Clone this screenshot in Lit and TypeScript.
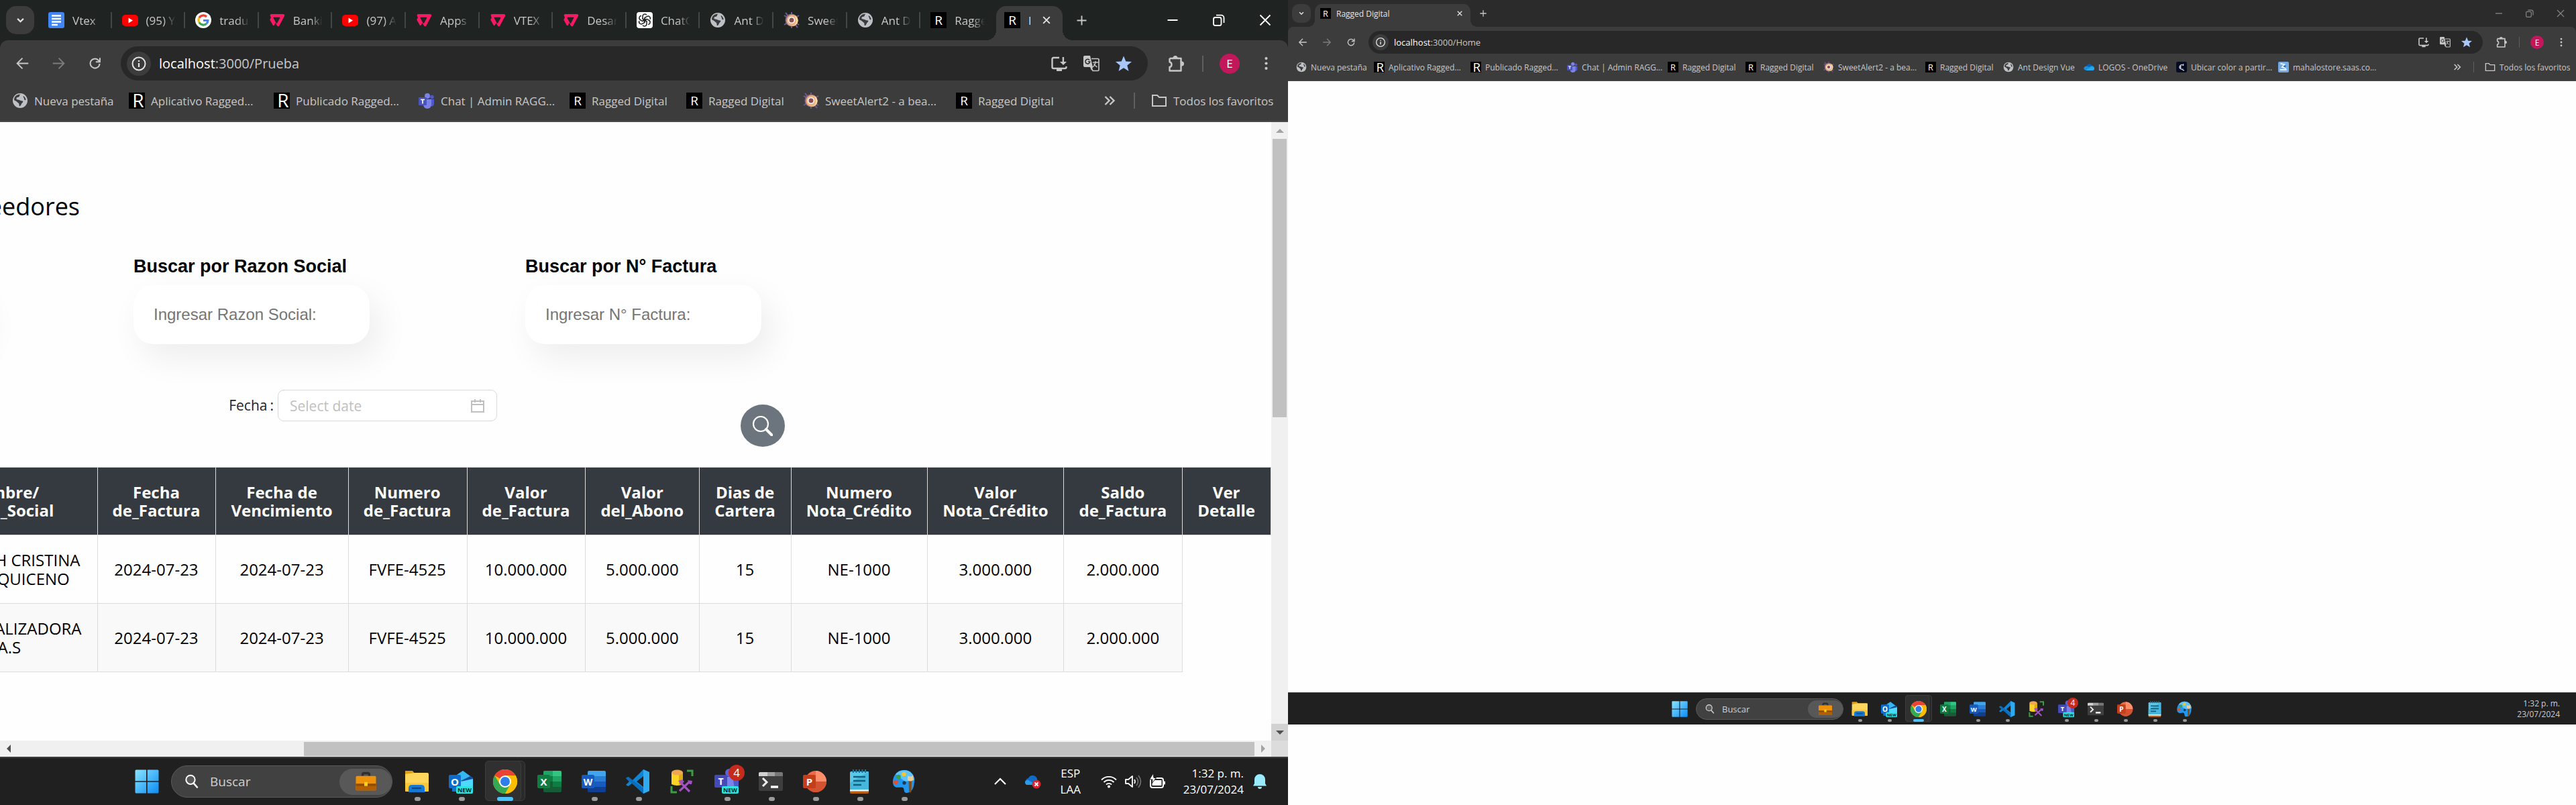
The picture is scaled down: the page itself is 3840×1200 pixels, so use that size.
import { LitElement, html, css, svg, nothing, type TemplateResult } from "lit";
import { customElement, property } from "lit/decorators.js";

type Art = TemplateResult;

const icon = (size: number, art: Art) =>
  html`<svg class="icon" viewBox="0 0 ${size} ${size}" aria-hidden="true">${art}</svg>`;

/* ---------- favicons, 24 x 24 ---------- */
const favicons: Record<string, Art> = {
  docs: svg`<rect width="24" height="24" rx="3" fill="#4285f4"/>
    <path d="M5 5.500h14M5 10h14M5 14.500h14M5 19h9" stroke="#fff" stroke-width="2.400"/>`,
  youtube: svg`<rect y="4" width="24" height="17" rx="5" fill="#f00"/><path d="M9.500 8.500v8l6.500-4z" fill="#fff"/>`,
  google: svg`<circle cx="12" cy="12" r="12" fill="#fff"/>
    <g fill="none" stroke-width="3.200">
      <path d="M17 7A7 7 0 0 0 6 8.500" stroke="#ea4335"/>
      <path d="M6 8.500a7 7 0 0 0 0 7" stroke="#fbbc05"/>
      <path d="M6 15.500a7 7 0 0 0 10.500 2" stroke="#34a853"/>
      <path d="M16.500 17.500a6.500 6.500 0 0 0 2.400-5H12" stroke="#4285f4"/>
    </g>`,
  vtex: svg`<path d="M3.500 3h17.700c1.600 0 2.600 1.600 1.800 3l-7.600 14.300a2 2 0 0 1-3.500 0l-2.300-4.300-1.900 3.500a1.200 1.200 0 0 1-2 0L1.500 12a1.200 1.200 0 0 1 0-1.200L3 8 1.900 5.900C1.200 4.600 2 3 3.500 3zm3.800 4.700a.8.8 0 0 0-.7 1.200l4.100 7.700a.8.8 0 0 0 1.400 0l4.100-7.700a.8.8 0 0 0-.7-1.200z" fill="#f71963"/>`,
  gpt: svg`<rect width="24" height="24" rx="4" fill="#fff"/>
    <g fill="none" stroke="#222" stroke-width="1.500">
      ${[0, 60, 120, 180, 240, 300].map(
        (a) => svg`<path transform="rotate(${a} 12 12)" d="M9 10.200V6.300a3.300 3.300 0 0 1 6-1.900M9 10.200l3.200 1.900 3.400-2"/>`
      )}
    </g>`,
  globe: svg`<circle cx="12" cy="12" r="11" fill="#bdc1c6"/>
    <path d="M13 2.500c-3 1-1 3-3 4s-3 0-3.500 2 2 2 4 2.500 2.500 1.500 4.500 1.500 1.500 2 0 3-1 3-3 4.500c-1 .8-1.600-.8-1.500-2 .2-2-1.500-2.500-3-4s-3.500-2-4.500-3C3 6 7 2.500 13 2.500z" fill="#3c3c3c"/>
    <path d="M17 5c2 1.500 3.500 3.500 3.600 6-1.600 1-2.600-.3-2.600-1.800S16 7 17 5z" fill="#3c3c3c"/>`,
  sweet: svg`<g stroke="#6e5a86" stroke-width="2">
      <path d="M12 0v24M1 5l22 14M23 5L1 19M3 1l18 22"/></g>
    <circle cx="12" cy="12" r="9.500" fill="#8b6b86"/><circle cx="13" cy="12.500" r="8.500" fill="#eeb183"/>
    <path d="M17 5a8.500 8.500 0 0 1-5 16c4 0 7-3 7-8z" fill="#f8d9a0"/><circle cx="12" cy="12" r="5" fill="#fff"/><circle cx="12" cy="12" r="3.500" fill="#8a4f52"/>`,
  ragged: svg`<rect width="24" height="24" fill="#000"/><text x="12" y="19" text-anchor="middle" font-size="19" font-family="Open Sans, sans-serif" fill="#fff">R</text>`,
  raggedBig: svg`<rect width="24" height="24" fill="#000"/><text x="14" y="22" text-anchor="middle" font-size="28" font-family="Open Sans, sans-serif" font-weight="400" fill="#fff">R</text>`,
  teams: svg`<circle cx="13" cy="5" r="4" fill="#7b83eb"/><circle cx="20" cy="6.500" r="2.700" fill="#5059c9"/>
    <path d="M16 10h7v7a4 4 0 0 1-6 3z" fill="#5059c9"/><path d="M7 10h12v8a6 6 0 0 1-12 0z" fill="#7b83eb"/>
    <rect y="7" width="12" height="12" rx="1" fill="#4b53bc"/><path d="M3 10.500h6M6 10.500v6" stroke="#fff" stroke-width="1.700"/>`,
  onedrive: svg`<path d="M7 9a6 6 0 0 1 11-1l-6 8-8 1C2 14 3 10 7 9z" fill="#0a5fb4"/><path d="M2 18c-3-3-1-8 4-8 3 0 4 1 6 2l6-3c4 0 6 3 6 6 0 2-1 4-3 4H5z" fill="#1490df"/><path d="M5 19l11-7c2-2 8 0 8 3s-2 4.500-4 4.500H6z" fill="#28a8ea"/>`,
  color: svg`<rect width="24" height="24" rx="4" fill="#050b20"/><path d="M15.500 8a5 5 0 1 0 0 8M12 9.500a2.500 2.500 0 1 0 0 5M16 5v4M14 18l4 2" fill="none" stroke="#e8ecf5" stroke-width="1.600"/>`,
  mahalo: svg`<rect width="24" height="24" rx="3" fill="#74a9e2"/><path d="M5 4l9 2-5 6 9 3M4 18h15" stroke="#e4f0fc" stroke-width="3" fill="none"/><path d="M11 10l6-3v7z" fill="#2d6db8"/>`,
};

/* ---------- browser glyphs, 24 x 24, drawn in the current colour ---------- */
const line = (d: string, w = 2) =>
  svg`<path d=${d} fill="none" stroke="currentColor" stroke-width=${w}/>`;
const glyphs: Record<string, Art> = {
  down: line("M7 9l5 5 5-5", 2.6),
  back: line("M22 12H3.500M12 3L3 12l9 9", 2.2),
  forward: line("M2 12h18.500M12 3l9 9-9 9", 2.2),
  reload: svg`${line("M20 12.500a8 8 0 1 1-2.500-6.200L20 9", 2.3)}${line("M20.500 2.500v7h-7", 2.3)}`,
  info: svg`<circle cx="12" cy="12" r="9.500" fill="none" stroke="currentColor" stroke-width="2"/><path d="M12 11v6M12 7v2" stroke="currentColor" stroke-width="2.200"/>`,
  close: line("M5.500 5.500l13 13M18.500 5.500l-13 13", 2.5),
  plus: line("M12 4v16M4 12h16", 2.2),
  install: svg`${line("M12 3H3.500Q1.500 3 1.500 5v12q0 2 2 2h17q2 0 2-2v-1", 2.4)}<path d="M8 18h8v5H8zM16.700 2h2.400v7h4L18 14 13 9h3.700z" fill="currentColor"/>`,
  translate: svg`<path d="M2 0h8l4 17H2q-2 0-2-2V2q0-2 2-2z" fill="currentColor"/><path d="M9 6.500A3.400 3.400 0 1 0 9.800 9H7" fill="none" stroke="#282828" stroke-width="1.500"/>
    <path d="M12 4.500h9.500q1.500 0 1.500 1.500v15q0 1.500-1.500 1.500H14l-2.500-5" fill="none" stroke="currentColor" stroke-width="1.700"/><path d="M14 10h8M18 8v2c0 3-2 5-4 7M15.500 12c1 2 3 4 5 5" fill="none" stroke="currentColor" stroke-width="1.400"/><path d="M10 17h4l-2 5z" fill="currentColor"/>`,
  star: svg`<path d="M12 .5l3.300 8 8.700.6-6.700 5.500 2.200 8.400L12 18.300 4.500 23l2.200-8.400L0 9.100l8.700-.6z" fill="#a8c7fa"/>`,
  puzzle: svg`<path d="M2.500 4H8M15 4h4.500v5M19.500 16v6.500h-17V17c4-.5 4-7 0-7.500V4" fill="none" stroke="currentColor" stroke-width="2.400" stroke-linejoin="round"/><path d="M7.500 5V3.500a3.500 3.500 0 0 1 7 0V5zM19 8.500h1.500a3.500 3.500 0 0 1 0 7H19z" fill="currentColor"/><path d="M19.500 8v8M7 4h9" stroke="currentColor" stroke-width="2.400"/>`,
  dots: svg`<g fill="currentColor"><circle cx="12" cy="3.500" r="2.400"/><circle cx="12" cy="12" r="2.400"/><circle cx="12" cy="20.500" r="2.400"/></g>`,
  more: line("M5.500 6l6 6-6 6M12.500 6l6 6-6 6", 2.4),
  folder: line("M2 4h7l3 3h10v13H2z", 2),
  minimize: line("M4.500 12h15", 2),
  restore: svg`<rect x="4" y="8" width="11.500" height="12" rx="2.500" fill="none" stroke="currentColor" stroke-width="1.800"/><path d="M8 4.700h7.500a4 4 0 0 1 4 4V16" fill="none" stroke="currentColor" stroke-width="1.800"/>`,
  exit: line("M4.500 4.500l15 15M19.500 4.500l-15 15", 1.8),
};

/* ---------- desktop icons, 36 x 36 ---------- */
const letter = (x: number, y: number, s: string, size = 16, fill = "#fff") =>
  svg`<text x=${x} y=${y} text-anchor="middle" font-size=${size} font-weight="700" font-family="Open Sans, sans-serif" fill=${fill}>${s}</text>`;
const newBadge = svg`<rect x="11" y="25" width="25" height="11" rx="2" fill="#2fe4e0"/>${letter(23.5, 34, "NEW", 9, "#07262b")}`;

const apps: Record<string, Art> = {
  start: svg`<defs><linearGradient id="win" x2="1" y2="1"><stop stop-color="#8be4ff"/><stop offset="1" stop-color="#0a8cf5"/></linearGradient></defs>
    <path d="M2 .5h15v16.700H.5V2Q.5.500 2 .5zM18.700.5H34q1.500 0 1.500 1.500v15.200H18.700zM.5 18.800H17v16.700H2Q.5 35.500.5 34zM18.700 18.800h16.800V34q0 1.500-1.500 1.500H18.700z" fill="url(#win)"/>`,
  search: svg`<circle cx="15" cy="14" r="10" fill="#ffffff22" stroke="currentColor" stroke-width="3"/><path d="M22 22l8 9" stroke="currentColor" stroke-width="3.600" stroke-linecap="round"/>`,
  bag: svg`<path d="M12 8V6q0-3 3-3h6q3 0 3 3v2" fill="none" stroke="#2e2e2e" stroke-width="4"/><rect y="8" width="36" height="26" rx="2" fill="#ee9209"/><path d="M0 22h36v10q0 2-2 2H2q-2 0-2-2z" fill="#b25f04"/><path d="M0 22h36v4H0z" fill="#8f4c06"/><rect x="15" y="19" width="6" height="7" fill="#f7d514"/>`,
  folder: svg`<path d="M1 2h11l4 5H1z" fill="#e0a00e"/><path d="M1 7l14-2h19q2 0 2 2v25H1z" fill="#ffd65c"/><path d="M1 20h35v12q0 1-1 1H2q-1 0-1-1z" fill="#fcc736"/><path d="M6 34v-6q0-5 5-5h14q5 0 5 5v6z" fill="#1478d4"/><path d="M11 28h14" stroke="#0a4a8c" stroke-width="2.400"/>`,
  outlook: svg`<path d="M5 13L21 2l15 11v20H5z" fill="#1276d1"/><path d="M12 8l9-6 15 11-15 9z" fill="#35b8f1"/><path d="M36 13v14L18 17l14-7z" fill="#124a9e"/><path d="M18 18l18-4v16H12z" fill="#50d9ff"/><rect y="8" width="18" height="20" rx="2" fill="#0f6cc9"/>${letter(9, 23.5, "O", 15)}${newBadge}`,
  chrome: svg`<circle cx="18" cy="18" r="18" fill="#fbbc04"/><path d="M18 18L2.400 9a18 18 0 0 1 31.200 0H18z" fill="#ea4335"/><path d="M2.400 9a18 18 0 0 0 15.600 27l8-14L10 22z" fill="#34a853"/><path d="M33.600 9H18l8 13-8 14A18 18 0 0 0 33.600 9z" fill="#fbbc04"/><circle cx="18" cy="18" r="9" fill="#fff"/><circle cx="18" cy="18" r="7" fill="#2f7de9"/>`,
  excel: svg`<rect x="9" y="2" width="27" height="32" rx="2" fill="#185c37"/><path d="M9 10V4q0-2 2-2h12v8z" fill="#21a366"/><path d="M23 2h11q2 0 2 2v6H23z" fill="#33c481"/><path d="M9 10h14v8H9z" fill="#107c41"/><path d="M23 10h13v8H23z" fill="#21a366"/><path d="M23 18h13v8H23z" fill="#107c41"/><rect y="8" width="19" height="20" rx="2" fill="#107c41"/>${letter(9.5, 23.5, "X", 15)}`,
  word: svg`<path d="M9 10V4q0-2 2-2h23q2 0 2 2v6z" fill="#41a5ee"/><path d="M9 10h27v8H9z" fill="#2b7cd3"/><path d="M9 18h27v8H9z" fill="#185abd"/><path d="M9 26h27v6q0 2-2 2H11q-2 0-2-2z" fill="#103f91"/><rect y="8" width="19" height="20" rx="2" fill="#185abd"/>${letter(9.5, 23.5, "W", 14)}`,
  code: svg`<path d="M26 0l9 4v28l-9 4L10 20l-6.500 5L0 23l5-5-5-5 3.500-2L10 16zM26 10l-10 8 10 8z" fill="#0e86d4" fill-rule="evenodd"/><path d="M26 0l9 4v28l-9 4z" fill="#2fa9f0"/><path d="M0 13l3.500-2L26 28v8z" fill="#0a6dbd"/>`,
  ssms: svg`<path d="M2 5v17q8 4 17 0V5z" fill="#fdd425"/><path d="M13 5v18q3 0 6-1.500V5z" fill="#e0a911"/><ellipse cx="10.500" cy="4.500" rx="8.500" ry="4" fill="#f0a953"/><path d="M25 2h8v8M2 25v9h8" fill="none" stroke="#3f9c46" stroke-width="3"/><path d="M14 32l14-13M15 19l14 14" stroke="#a053c0" stroke-width="3.200"/><path d="M12 17l6-2 3 3-4 4zM26 16l7 1-1 5-3 0z" fill="#a053c0"/>`,
  teams: svg`<circle cx="22" cy="5" r="6" fill="#5b63d6"/><path d="M14 11h22v18q-2 7-11 7-8 0-11-6z" fill="#7b83eb"/><path d="M27 11h9v18l-5 5z" fill="#5059c9"/><rect y="8" width="19" height="19" rx="2" fill="#444ab8"/>${letter(9.5, 23, "T", 14)}${newBadge}`,
  terminal: svg`<rect y="4" width="36" height="28" rx="2" fill="#3e3e3e"/><path d="M2 4h11v6H0V6q0-2 2-2z" fill="#d2d2d2"/><path d="M13 4h11v6H13z" fill="#a2a2a2"/><path d="M24 4h10q2 0 2 2v4H24z" fill="#777"/><path d="M6 13l6 6-6 6" fill="none" stroke="#eee" stroke-width="3"/><path d="M18 26h11" stroke="#fff" stroke-width="3.500"/>`,
  powerpoint: svg`<circle cx="19" cy="18" r="16" fill="#ed6c47"/><path d="M19 2a16 16 0 0 1 16 16H19z" fill="#ff8f6b"/><path d="M3 18h32a16 16 0 0 1-32 0z" fill="#d35230"/><rect y="8" width="19" height="20" rx="2" fill="#c43e1c"/>${letter(9.5, 23.5, "P", 15)}`,
  notepad: svg`<rect x="4" y="3" width="28" height="30" rx="2" fill="#5ec8e8"/><path d="M4 20l28-17v28H4z" fill="#47b6dc"/><path d="M4 30h28v3H4z" fill="#f2f2f2"/><path d="M4 32.500h28V34q0 2-2 2H6q-2 0-2-2z" fill="#b8600f"/><path d="M9 0v5M13.500 0v5M18 0v5M22.500 0v5M27 0v5" stroke="#16739b" stroke-width="2.200"/><path d="M9 11h18M9 17h18M9 23h12" stroke="#11607f" stroke-width="2.400"/>`,
  paint: svg`<path d="M19 1C27 1 34 7 34 16c0 8-2 18-11 19-6 .5-3-6-6-8s-9 2-13-2C-1 19 3 1 19 1z" fill="#2196ee"/><path d="M19 1C27 1 34 7 34 16L20 18 6 7q5-6 13-6z" fill="#5cc4fa"/><circle cx="10.500" cy="11" r="3.300" fill="#3ea044"/><circle cx="18.500" cy="7" r="3.300" fill="#f7c52b"/><circle cx="6.500" cy="19" r="3.300" fill="#e4502a"/><circle cx="19" cy="20" r="2.700" fill="#17395e"/><path d="M25.500 16h4.500l-.5 17q-1.700 3-3.500 0z" fill="#8a4b12"/><path d="M24 9q4 3 8 0v7q-4 3-8 0z" fill="#eccb9a"/>`,
};

const tray: Record<string, Art> = {
  up: svg`<path d="M4 16l8-8 8 8" fill="none" stroke="currentColor" stroke-width="2.200"/>`,
  cloud: svg`<path d="M3 15a5 5 0 0 1 3-8 7 7 0 0 1 13 1v8z" fill="#0f6cc9"/><path d="M3 17c-4-3-2-8 3-7l12 7H5z" fill="#2a9be8"/><circle cx="18" cy="16" r="6.500" fill="#d9252f"/><path d="M15.500 13.500l5 5M20.500 13.500l-5 5" stroke="#fff" stroke-width="1.800"/>`,
  wifi: svg`<g fill="none" stroke="currentColor" stroke-width="1.800"><path d="M1 9.500a15.500 15.500 0 0 1 22 0M4.500 13a10.600 10.600 0 0 1 15 0M8 16.500a5.700 5.700 0 0 1 8 0"/></g><circle cx="12" cy="19.500" r="2" fill="currentColor"/>`,
  sound: svg`<path d="M1 9h4l6-5v16l-6-5H1z" fill="none" stroke="currentColor" stroke-width="1.800" stroke-linejoin="round"/><path d="M14 9q2 3 0 6" fill="none" stroke="currentColor" stroke-width="1.700"/><path d="M17 6q5 6 0 12M20 3q7 9 0 18" fill="none" stroke="#777" stroke-width="1.500"/>`,
  battery: svg`<rect x="2" y="7" width="19" height="14" rx="3" fill="none" stroke="currentColor" stroke-width="2"/><path d="M7 10h11.500v8h-14v-4zM22 11.500h1q1 0 1 1v3q0 1-1 1h-1z" fill="currentColor"/><path d="M6 0L.5 9H5l-1 6 6.500-8.500H7z" fill="currentColor" stroke="#202020" stroke-width="1"/>`,
  bell: svg`<path d="M12 1a8 8 0 0 1 8 8v6l2 3.500H2L4 15V9a8 8 0 0 1 8-8zM9 20h6a3 3 0 0 1-6 0z" fill="#99ebff"/>`,
};

interface Tab {
  icon: string;
  title: string;
  active?: boolean;
}
interface Bookmark {
  icon: string;
  title: string;
  /* label width in layout units */
  span: number;
}

const manyTabs: Tab[] = [
  { icon: "docs", title: "Vtex" },
  { icon: "youtube", title: "(95) YouTube" },
  { icon: "google", title: "traductor" },
  { icon: "vtex", title: "Banking" },
  { icon: "youtube", title: "(97) Apps" },
  { icon: "vtex", title: "Apps VTEX" },
  { icon: "vtex", title: "VTEX IO" },
  { icon: "vtex", title: "Desarrollo" },
  { icon: "gpt", title: "ChatGPT" },
  { icon: "globe", title: "Ant Design" },
  { icon: "sweet", title: "SweetAlert2" },
  { icon: "globe", title: "Ant Design" },
  { icon: "ragged", title: "Ragged Digital" },
  { icon: "ragged", title: "Ragged Digital", active: true },
];

const bookmarks: Bookmark[] = [
  { icon: "globe", title: "Nueva pestaña", span: 39 },
  { icon: "raggedBig", title: "Aplicativo Ragged...", span: 53 },
  { icon: "raggedBig", title: "Publicado Ragged...", span: 53 },
  { icon: "teams", title: "Chat | Admin RAGG...", span: 56 },
  { icon: "ragged", title: "Ragged Digital", span: 39 },
  { icon: "ragged", title: "Ragged Digital", span: 39 },
  { icon: "sweet", title: "SweetAlert2 - a bea...", span: 57 },
  { icon: "ragged", title: "Ragged Digital", span: 39 },
];
const moreBookmarks: Bookmark[] = [
  { icon: "globe", title: "Ant Design Vue", span: 41 },
  { icon: "onedrive", title: "LOGOS - OneDrive", span: 50 },
  { icon: "color", title: "Ubicar color a partir...", span: 57 },
  { icon: "mahalo", title: "mahalostore.saas.co...", span: 57 },
];

/* Every measure of the chrome is a multiple of --u, so one sheet serves both display scales. */
const scaleStyles = css`
  :host {
    --u: 2px;
    --text: 12px;
    --url: 13px;
    --hair: 1px;
    display: block;
    font-family: "Open Sans", "Noto Sans", sans-serif;
  }
  :host([large]) {
    --u: 3px;
    --text: 17px;
    --url: 20px;
    --hair: 2px;
  }
  * {
    box-sizing: border-box;
  }
  button {
    border: 0;
    padding: 0;
    background: none;
    color: inherit;
    font: inherit;
    display: flex;
    align-items: center;
    justify-content: center;
    flex: none;
  }
  .icon {
    display: block;
    flex: none;
    overflow: visible;
    width: calc(var(--u) * 8);
    height: calc(var(--u) * 8);
  }
`;

@customElement("browser-window")
export class BrowserWindow extends LitElement {
  @property({ type: Boolean, reflect: true }) large = false;
  @property() host = "";
  @property() path = "";
  @property({ attribute: false }) tabs: Tab[] = [];
  @property({ attribute: false }) bookmarks: Bookmark[] = [];

  static styles = [
    scaleStyles,
    css`
      :host {
        display: flex;
        flex-direction: column;
        min-height: 0;
        color: #c7c7c7;
        background: #2b2b2b;
        font-size: var(--text);
      }
      :host([large]) {
        background: #1f2322;
      }
      .strip {
        display: flex;
        height: calc(var(--u) * 20);
        padding-left: calc(var(--u) * 3);
      }
      .tab-search {
        width: calc(var(--u) * 14);
        height: calc(var(--u) * 14);
        margin: calc(var(--u) * 3) calc(var(--u) * 3) 0 0;
        border-radius: calc(var(--u) * 5);
        background: #3c3c3c;
        color: #e3e3e3;
      }
      .tabs {
        display: flex;
        flex: 0 1 calc(var(--u) * 116);
        min-width: 0;
        padding-top: calc(var(--u) * 3);
      }
      :host([large]) .tabs {
        flex-basis: calc(var(--u) * 508);
      }
      .tab {
        display: flex;
        align-items: center;
        flex: 1 1 0;
        min-width: 0;
        gap: calc(var(--u) * 4);
        padding: 0 calc(var(--u) * 1) calc(var(--u) * 3) calc(var(--u) * 4);
      }
      .tab.active {
        position: relative;
        background: #3c3c3c;
        color: #e3e3e3;
        border-radius: calc(var(--u) * 5) calc(var(--u) * 5) 0 0;
        padding-right: calc(var(--u) * 2);
      }
      :host([large]) .tab.active {
        flex: 0 0 calc(var(--u) * 33);
      }
      .tab.active::before,
      .tab.active::after {
        content: "";
        position: absolute;
        bottom: 0;
        width: calc(var(--u) * 5);
        height: calc(var(--u) * 5);
      }
      .tab.active::before {
        right: 100%;
        background: radial-gradient(circle at 0 0, transparent calc(var(--u) * 5), #3c3c3c calc(var(--u) * 5));
      }
      .tab.active::after {
        left: 100%;
        background: radial-gradient(circle at 100% 0, transparent calc(var(--u) * 5), #3c3c3c calc(var(--u) * 5));
      }
      .tab-title {
        flex: 1;
        min-width: 0;
        overflow: hidden;
        white-space: nowrap;
        mask-image: linear-gradient(to right, #000 calc(100% - var(--u) * 6), transparent);
      }
      .active .tab-title {
        mask-image: none;
      }
      .tab-line {
        width: var(--hair);
        height: calc(var(--u) * 8);
        background: #454746;
      }
      .tab-line.off {
        background: none;
      }
      .tab-close {
        width: calc(var(--u) * 12);
        margin-left: calc(var(--u) * -2);
      }
      .tab-close .icon {
        width: calc(var(--u) * 6);
        height: calc(var(--u) * 6);
      }
      .new-tab {
        width: calc(var(--u) * 19);
      }
      .window-buttons {
        display: flex;
        margin-left: auto;
        color: #858585;
      }
      :host([large]) .window-buttons {
        color: #fff;
      }
      .window-buttons button {
        width: calc(var(--u) * 23);
      }
      .panel {
        background: #3c3c3c;
        border-radius: calc(var(--u) * 4) calc(var(--u) * 4) 0 0;
        border-bottom: var(--hair) solid #4a4a4a;
      }
      .toolbar {
        display: flex;
        align-items: center;
        padding: calc(var(--u) * 3) calc(var(--u) * 2) 0;
      }
      .tool {
        width: calc(var(--u) * 18);
        height: calc(var(--u) * 17);
      }
      .small .icon {
        width: calc(var(--u) * 7);
        height: calc(var(--u) * 7);
      }
      .dim {
        color: #7c7c7c;
      }
      .omnibox {
        display: flex;
        align-items: center;
        flex: 1;
        min-width: 0;
        height: calc(var(--u) * 17);
        margin: 0 calc(var(--u) * 5) 0 calc(var(--u) * 4);
        padding: 0 calc(var(--u) * 4) 0 calc(var(--u) * 3);
        border-radius: calc(var(--u) * 9);
        background: #282828;
        font-size: var(--url);
      }
      .site {
        width: calc(var(--u) * 12);
        height: calc(var(--u) * 12);
        border-radius: 50%;
        background: #3c3c3c;
        color: #e3e3e3;
      }
      .url {
        flex: 1;
        padding-left: calc(var(--u) * 4);
        white-space: nowrap;
      }
      .url b {
        font-weight: 400;
        color: #fff;
      }
      .omnibox .action {
        width: calc(var(--u) * 16);
      }
      .divider {
        width: var(--hair);
        height: calc(var(--u) * 8);
        margin: 0 calc(var(--u) * 4);
        background: #5f5f5f;
        flex: none;
      }
      .avatar {
        width: calc(var(--u) * 10);
        height: calc(var(--u) * 10);
        border-radius: 50%;
        background: #c2185b;
        color: #fff;
        display: flex;
        align-items: center;
        justify-content: center;
      }
      .bookmarks {
        display: flex;
        align-items: center;
        height: calc(var(--u) * 20);
        padding: 0 calc(var(--u) * 7) 0 calc(var(--u) * 6);
        gap: calc(var(--u) * 8);
        white-space: nowrap;
      }
      .bookmark {
        display: flex;
        align-items: center;
        gap: calc(var(--u) * 3);
        color: inherit;
        text-decoration: none;
      }
      .overflow {
        margin-left: auto;
      }
      .bookmarks .divider {
        margin: 0;
      }
      .view {
        flex: 1;
        min-height: 0;
        display: flex;
        background: #fefefe;
      }
      ::slotted(*) {
        flex: 1;
        min-width: 0;
      }
    `,
  ];

  private tabView(tab: Tab, i: number) {
    const next = this.tabs[i + 1];
    return html`<div class="tab ${tab.active ? "active" : ""}">
      ${icon(24, favicons[tab.icon])}
      <span class="tab-title">${tab.title}</span>
      ${tab.active
        ? html`<button class="tab-close" aria-label="Cerrar">${icon(24, glyphs.close)}</button>`
        : html`<span class="tab-line ${next?.active ? "off" : ""}"></span>`}
    </div>`;
  }

  private tool(name: string, label: string, extra = "") {
    return html`<button class="tool ${extra}" aria-label=${label}>${icon(24, glyphs[name])}</button>`;
  }

  render() {
    return html`
      <div class="strip">
        <button class="tab-search small" aria-label="Buscar pestañas">${icon(24, glyphs.down)}</button>
        <div class="tabs">${this.tabs.map((t, i) => this.tabView(t, i))}</div>
        <button class="new-tab small" aria-label="Nueva pestaña">${icon(24, glyphs.plus)}</button>
        <div class="window-buttons">
          <button aria-label="Minimizar">${icon(24, glyphs.minimize)}</button>
          <button aria-label="Restaurar">${icon(24, glyphs.restore)}</button>
          <button aria-label="Cerrar ventana">${icon(24, glyphs.exit)}</button>
        </div>
      </div>
      <div class="panel">
        <div class="toolbar">
          ${this.tool("back", "Atrás", "small")} ${this.tool("forward", "Adelante", "small dim")}
          ${this.tool("reload", "Recargar", "small")}
          <div class="omnibox">
            <button class="site" aria-label="Información del sitio">${icon(24, glyphs.info)}</button>
            <span class="url"><b>${this.host}</b>${this.path}</span>
            <button class="action" aria-label="Instalar">${icon(24, glyphs.install)}</button>
            <button class="action" aria-label="Traducir">${icon(24, glyphs.translate)}</button>
            <button class="action" aria-label="Favorito">${icon(24, glyphs.star)}</button>
          </div>
          ${this.tool("puzzle", "Extensiones")}
          <span class="divider"></span>
          <button class="tool" aria-label="Perfil"><span class="avatar">E</span></button>
          ${this.tool("dots", "Menú", "small")}
        </div>
        <nav class="bookmarks">
          ${this.bookmarks.map(
            (b) => html`<a class="bookmark" href="#">
              ${icon(24, favicons[b.icon])}
              <span style="width:calc(var(--u) * ${b.span})">${b.title}</span>
            </a>`
          )}
          <button class="overflow" aria-label="Más">${icon(24, glyphs.more)}</button>
          <span class="divider"></span>
          <a class="bookmark" href="#">
            ${icon(24, glyphs.folder)}
            <span style="width:calc(var(--u) * ${50})">Todos los favoritos</span>
          </a>
        </nav>
      </div>
      <div class="view"><slot></slot></div>
    `;
  }
}

@customElement("task-bar")
export class TaskBar extends LitElement {
  @property({ type: Boolean, reflect: true }) large = false;

  static styles = [
    scaleStyles,
    css`
      :host {
        --label: 13px;
      }
      :host([large]) {
        --label: 19px;
      }
      .bar {
        display: flex;
        align-items: center;
        height: calc(var(--u) * 24);
        border-top: var(--hair) solid #3b3e3e;
        background: #202020;
        color: #ccc;
        font-size: var(--text);
        line-height: calc(var(--u) * 8);
      }
      :host([large]) .bar {
        color: #fff;
      }
      .lead {
        flex: 1 1 0;
        padding-right: calc(var(--u) * 12);
      }
      :host([large]) .lead {
        flex: 0 0 calc(var(--u) * 62);
      }
      .group {
        display: flex;
        align-items: center;
      }
      .app {
        position: relative;
        width: calc(var(--u) * 22);
        height: calc(var(--u) * 23);
      }
      .app .icon {
        width: calc(var(--u) * 12);
        height: calc(var(--u) * 12);
        position: relative;
      }
      .app.current::before,
      .app.current::after {
        content: "";
        position: absolute;
        top: calc(var(--u) * 1);
        bottom: calc(var(--u) * 2);
        left: calc(var(--u) * 1);
        right: calc(var(--u) * 1);
        border: 1px solid #3c3c3c;
        border-radius: calc(var(--u) * 2);
        background: #2a2a2a;
      }
      .app.current::after {
        right: calc(var(--u) * 3);
        background: #303030;
      }
      .app.current .icon {
        z-index: 1;
      }
      .mark {
        position: absolute;
        z-index: 1;
        bottom: calc(var(--u) * 2);
        left: calc(var(--u) * 10);
        width: calc(var(--u) * 3);
        height: calc(var(--u) * 2);
        border-radius: calc(var(--u) * 1);
        background: #9a9a9a;
      }
      .current .mark {
        left: calc(var(--u) * 7);
        width: calc(var(--u) * 8);
        background: #4cc2ff;
      }
      .count {
        position: absolute;
        z-index: 1;
        top: calc(var(--u) * 3);
        right: calc(var(--u) * 2);
        width: calc(var(--u) * 8);
        height: calc(var(--u) * 8);
        border-radius: 50%;
        background: #c42b1c;
        color: #fff;
        text-align: center;
      }
      .search {
        display: flex;
        align-items: center;
        width: calc(var(--u) * 110);
        height: calc(var(--u) * 16);
        margin: 0 calc(var(--u) * 1);
        padding-left: calc(var(--u) * 6);
        border: 1px solid #5a5a5a;
        border-radius: calc(var(--u) * 8);
        background: #414141;
      }
      .search input {
        flex: 1;
        min-width: 0;
        border: 0;
        padding: 0 0 0 calc(var(--u) * 5);
        background: none;
        font: inherit;
        font-size: var(--label);
      }
      .search input::placeholder {
        color: #d0d0d0;
        opacity: 1;
      }
      .highlight {
        width: calc(var(--u) * 26);
        height: calc(var(--u) * 13);
        border-radius: calc(var(--u) * 7);
        background: #585858;
      }
      .highlight .icon {
        width: calc(var(--u) * 11);
        height: calc(var(--u) * 10);
      }
      .tray {
        display: flex;
        align-items: center;
        justify-content: flex-end;
        flex: 1 1 0;
        padding-right: calc(var(--u) * 12);
        text-align: right;
        white-space: nowrap;
      }
      :host([large]) .tray {
        padding-right: calc(var(--u) * 10);
      }
      .slot {
        width: calc(var(--u) * 16);
      }
      .lang {
        width: calc(var(--u) * 22);
        text-align: center;
      }
      .status {
        display: flex;
        gap: calc(var(--u) * 4);
        margin: 0 calc(var(--u) * 9) 0 calc(var(--u) * 4);
      }
      .bell {
        margin-left: calc(var(--u) * 4);
      }
    `,
  ];

  private readonly items: { name: string; label: string; open?: boolean; current?: boolean; count?: number }[] = [
    { name: "folder", label: "Explorador", open: true },
    { name: "outlook", label: "Outlook", open: true },
    { name: "chrome", label: "Chrome", open: true, current: true },
    { name: "excel", label: "Excel" },
    { name: "word", label: "Word", open: true },
    { name: "code", label: "Code", open: true },
    { name: "ssms", label: "SQL" },
    { name: "teams", label: "Teams", open: true, count: 4 },
    { name: "terminal", label: "Terminal", open: true },
    { name: "powerpoint", label: "PowerPoint", open: true },
    { name: "notepad", label: "Bloc de notas", open: true },
    { name: "paint", label: "Paint", open: true },
  ];

  render() {
    return html`<footer class="bar">
      <div class="lead"></div>
      <div class="group">
        <button class="app" aria-label="Inicio">${icon(36, apps.start)}</button>
        <div class="search">
          ${icon(36, apps.search)}
          <input type="search" aria-label="Buscar" placeholder="Buscar" />
          <button class="highlight" aria-label="Destacado">${icon(36, apps.bag)}</button>
        </div>
        ${this.items.map(
          (a) => html`<button class="app ${a.current ? "current" : ""}" aria-label=${a.label}>
            ${icon(36, apps[a.name])} ${a.open ? html`<span class="mark"></span>` : nothing}
            ${a.count ? html`<span class="count">${a.count}</span>` : nothing}
          </button>`
        )}
      </div>
      <div class="tray">
        ${this.large
          ? html`<button class="slot" aria-label="Mostrar iconos">${icon(24, tray.up)}</button>
              <button class="slot" aria-label="OneDrive">${icon(24, tray.cloud)}</button>
              <span class="lang">ESP<br />LAA</span>
              <span class="status">${icon(24, tray.wifi)}${icon(24, tray.sound)}${icon(24, tray.battery)}</span>`
          : nothing}
        <time>1:32 p. m.<br />23/07/2024</time>
        ${this.large ? html`<button class="bell" aria-label="Notificaciones">${icon(24, tray.bell)}</button>` : nothing}
      </div>
    </footer>`;
  }
}

@customElement("invoice-page")
export class InvoicePage extends LitElement {
  static styles = css`
    :host {
      display: grid;
      grid-template: minmax(0, 1fr) 24px / minmax(0, 1fr) 25px;
      background: #fefefe;
      color: #000;
      font-family: "Open Sans", "Noto Sans", sans-serif;
    }
    * {
      box-sizing: border-box;
    }
    .scroller {
      display: flex;
      justify-content: flex-end;
      overflow: hidden;
    }
    .content {
      flex: none;
      padding-top: 102px;
    }
    h1 {
      margin: 0 0 49px;
      padding-left: 43px;
      font-size: 36px;
      font-weight: 400;
      line-height: 48px;
    }
    .filters {
      display: flex;
      justify-content: flex-end;
      gap: 232px;
      width: 0;
      min-width: 100%;
      padding-right: 760px;
      margin-bottom: 68px;
      font-family: "Liberation Sans", Arial, sans-serif;
    }
    .field {
      display: flex;
      flex-direction: column;
      flex: none;
      gap: 12px;
      width: 352px;
    }
    .field label {
      font-size: 27px;
      font-weight: 700;
      line-height: 32px;
    }
    .field input {
      height: 88px;
      padding: 0 30px;
      border: 0;
      border-radius: 30px;
      background: #fff;
      box-shadow: 13px 20px 50px rgba(0, 0, 0, 0.07);
      font: inherit;
      font-size: 24px;
    }
    .field input::placeholder {
      color: #757575;
    }
    .search-row {
      display: flex;
      justify-content: flex-end;
      padding-right: 725px;
      margin-bottom: 30px;
      font-size: 21px;
    }
    .date-label {
      display: flex;
      gap: 4px;
      line-height: 47px;
      margin-right: 6px;
      color: #222;
    }
    .date {
      display: flex;
      align-items: center;
      width: 327px;
      height: 47px;
      padding: 0 18px 0 17px;
      border: 1px solid #d9d9d9;
      border-radius: 9px;
      background: #fff;
      color: #bfbfbf;
    }
    .date input {
      flex: 1;
      min-width: 0;
      border: 0;
      padding: 0;
      background: none;
      font: inherit;
    }
    .date input::placeholder {
      color: #bfbfbf;
      opacity: 1;
    }
    .calendar {
      width: 20px;
      height: 20px;
    }
    .go {
      align-self: flex-end;
      width: 66px;
      height: 63px;
      margin: 22px 0 0 363px;
      padding: 0;
      border: 0;
      border-radius: 50%;
      background: #6c757d;
      display: flex;
      align-items: center;
      justify-content: center;
    }
    .go svg {
      width: 30px;
      height: 30px;
    }
    table {
      border-collapse: collapse;
      font-size: 24px;
      text-align: center;
      white-space: nowrap;
    }
    th,
    td {
      padding: 23px 23px 22px 22px;
      border: 1px solid #dcdcdc;
      line-height: 28px;
    }
    th {
      padding-bottom: 23px;
      background: #343a40;
      color: #fff;
      line-height: 27px;
    }
    tbody tr:nth-child(even) td {
      background: #f9f9f9;
    }
    .bar {
      display: flex;
      background: #f0f0f0;
    }
    .vertical {
      flex-direction: column;
    }
    .end {
      display: flex;
      align-items: center;
      justify-content: center;
      flex: 0 0 25px;
      color: #a3a3a3;
    }
    .end.pressed {
      background: #d2d2d2;
      color: #505050;
    }
    .end.strong {
      color: #505050;
    }
    .end svg {
      width: 12px;
      height: 12px;
    }
    .thumb {
      margin: 0 2px;
      background: #c1c1c1;
    }
    .bar:not(.vertical) .thumb {
      margin: 2px 0 1px;
    }
    .corner {
      background: #dcdcdc;
    }
  `;

  private readonly heads = [
    ["Nombre/", "Razon_Social"],
    ["Fecha", "de_Factura"],
    ["Fecha de", "Vencimiento"],
    ["Numero", "de_Factura"],
    ["Valor", "de_Factura"],
    ["Valor", "del_Abono"],
    ["Dias de", "Cartera"],
    ["Numero", "Nota_Crédito"],
    ["Valor", "Nota_Crédito"],
    ["Saldo", "de_Factura"],
    ["Ver", "Detalle"],
  ];
  private readonly rows = [
    ["ELIZABETH CRISTINA", "GOMEZ QUICENO"],
    ["COMERCIALIZADORA", "S.A.S"],
  ];
  private readonly values = ["2024-07-23", "2024-07-23", "FVFE-4525", "10.000.000", "5.000.000", "15", "NE-1000", "3.000.000", "2.000.000"];

  private arrow(d: string, extra = "") {
    return html`<span class="end ${extra}"><svg viewBox="0 0 12 12"><path d=${d} fill="currentColor" /></svg></span>`;
  }

  private field(id: string, label: string, hint: string) {
    return html`<div class="field"><label for=${id}>${label}</label><input id=${id} placeholder=${hint} /></div>`;
  }

  render() {
    return html`
      <div class="scroller">
        <div class="content">
          <h1>Proveedores</h1>
          <div class="filters">
            ${this.field("nit", "Buscar por Nit", "Ingresar Nit:")}
            ${this.field("social", "Buscar por Razon Social", "Ingresar Razon Social:")}
            ${this.field("invoice", "Buscar por N° Factura", "Ingresar N° Factura:")}
          </div>
          <div class="search-row">
            <label class="date-label" for="date"><span>Fecha</span><span>:</span></label>
            <div class="date">
              <input id="date" placeholder="Select date" />
              <svg class="calendar" viewBox="0 0 20 20" fill="none" stroke="currentColor" stroke-width="2">
                <path d="M1 3h18v16H1zM1 8h18M6 0v5M14 0v5" />
              </svg>
            </div>
            <button class="go" aria-label="Buscar">
              <svg viewBox="0 0 30 30" fill="none" stroke="#fff">
                <circle cx="12" cy="12" r="11" stroke-width="2.200" />
                <path d="M20 20l8.500 8.500" stroke-width="4" stroke-linecap="round" />
              </svg>
            </button>
          </div>
          <table>
            <thead>
              <tr>
                ${this.heads.map(([a, b]) => html`<th>${a}<br />${b}</th>`)}
              </tr>
            </thead>
            <tbody>
              ${this.rows.map(
                ([a, b]) => html`<tr>
                  <td>${a}<br />${b}</td>
                  ${this.values.map((v) => html`<td>${v}</td>`)}
                </tr>`
              )}
            </tbody>
          </table>
        </div>
      </div>
      <div class="bar vertical">
        ${this.arrow("M0 9l6-6 6 6z")}
        <span class="thumb" style="flex-grow:${415}"></span>
        <span style="flex-grow:${458}"></span>
        ${this.arrow("M0 3l6 6 6-6z", "pressed")}
      </div>
      <div class="bar">
        ${this.arrow("M9 0L3 6l6 6z", "strong")}
        <span style="flex-grow:${428}"></span>
        <span class="thumb" style="flex-grow:${1417}"></span>
        ${this.arrow("M3 0l6 6-6 6z")}
      </div>
      <div class="corner"></div>
    `;
  }
}

@customElement("app-root")
export class AppRoot extends LitElement {
  static styles = css`
    :host {
      display: grid;
      grid-template-columns: minmax(0, 1fr) minmax(0, 1fr);
      align-items: start;
      background: #fefefe;
    }
    .display {
      display: flex;
      flex-direction: column;
      height: 100vh;
    }
    .display.second {
      height: 90vh;
    }
    browser-window {
      flex: 1;
    }
  `;

  render() {
    return html`
      <section class="display">
        <browser-window large host="localhost" path=":3000/Prueba" .tabs=${manyTabs} .bookmarks=${bookmarks}>
          <invoice-page></invoice-page>
        </browser-window>
        <task-bar large></task-bar>
      </section>
      <section class="display second">
        <browser-window
          host="localhost"
          path=":3000/Home"
          .tabs=${[{ icon: "ragged", title: "Ragged Digital", active: true }]}
          .bookmarks=${[...bookmarks, ...moreBookmarks]}
        ></browser-window>
        <task-bar></task-bar>
      </section>
    `;
  }
}
